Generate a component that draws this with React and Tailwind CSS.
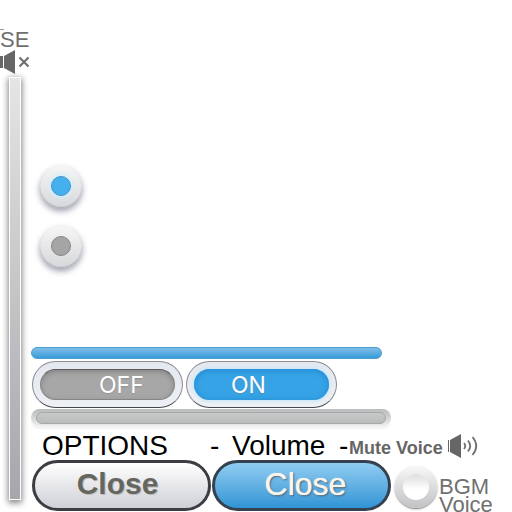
import React, { useState } from "react";

const rangeBase =
  "appearance-none [&::-webkit-slider-thumb]:appearance-none [&::-webkit-slider-thumb]:opacity-0";

function MutedIcon() {
  return (
    <svg className="block h-6 w-[30px]" viewBox="0 0 30 24" aria-hidden="true">
      <path d="M0 6h3v12H0zM4 6L15 0v24L4 18z" fill="#666" />
      <path d="M19.5 7.500l9 9M28.500 7.500l-9 9" stroke="#707070" strokeWidth="2.200" fill="none" />
    </svg>
  );
}

function SpeakerIcon() {
  return (
    <svg className="block h-6 w-[30px]" viewBox="0 0 30 24" aria-hidden="true">
      <path d="M0 6h1v12H0zM2 6L13 0v24L2 18z" fill="#666" />
      <path d="M16 9Q18.500 12 16 15M20 6.500Q24.500 12 20 17.500M24.500 3Q32 12 24.500 21" stroke="#707070" strokeWidth="1.800" fill="none" />
    </svg>
  );
}

function Radio({ label, checked, onChange }) {
  return (
    <label className="relative block size-[42px]">
      <input
        type="radio"
        name="mode"
        aria-label={label}
        checked={checked}
        onChange={onChange}
        className="peer block size-[42px] appearance-none rounded-full bg-linear-to-b from-[#f6f6f6] to-[#d6d7da] shadow-[0_3px_6px_0_#9a9cac,inset_0_-1px_1px_#aaaaaf]"
      />
      <span className="absolute top-[10px] left-[11px] size-5 rounded-full border border-[#858585] bg-[#a5a5a5] peer-checked:border-[#4793c4] peer-checked:bg-[#45b0ee] peer-checked:shadow-[0_0_4px_2px_#d2effb]" />
    </label>
  );
}

function Toggle({ on, children }) {
  return (
    <button
      type="button"
      aria-pressed={on}
      className="h-[47px] w-[151px] rounded-full border border-[#8b8d93] border-b-[#45474d] bg-linear-to-b from-[#e4e8ef] to-[#edf1f5] p-[7px]"
    >
      <span
        className={
          on
            ? "flex h-[31px] items-center rounded-full bg-[#36a3e6] pl-[37px] shadow-[0_0_3px_2px_#cfe8fa,inset_0_1px_6px_#2385cf]"
            : "flex h-[31px] items-center rounded-full border border-[#858585] border-t-[#5c5c5c] bg-[#a7a7a7] pl-[58px] shadow-[inset_0_2px_5px_#858585]"
        }
      >
        <span className="font-['Inter',sans-serif] text-[23px] leading-6 text-white [text-shadow:0_1px_1px_#80808080]">
          {children}
        </span>
      </span>
    </button>
  );
}

export default function App() {
  const [mode, setMode] = useState("on");
  return (
    <main className="flex h-screen min-h-[512px] overflow-hidden bg-white font-['Liberation_Sans',Arial,sans-serif] text-[#666]">
      <aside className="flex w-[31px] shrink-0 flex-col pt-[29px] pb-3">
        <span className="h-px w-1 bg-[#999]" />
        <label htmlFor="se" className="text-[22px] leading-5 text-[#707070]">SE</label>
        <MutedIcon />
        <input
          id="se"
          type="range"
          className={`${rangeBase} mt-[3px] ml-[9px] min-h-0 w-3 flex-1 border border-white bg-linear-to-b from-[#e3e6e3] to-[#a6a6ac] shadow-[0_2px_6px_1px_#858585] [writing-mode:vertical-lr]`}
        />
      </aside>

      <div className="flex min-w-0 flex-1 flex-col">
        <fieldset className="flex flex-1 flex-col gap-[18px] pt-[166px] pl-[9px]">
          <Radio label="On" checked={mode === "on"} onChange={() => setMode("on")} />
          <Radio label="Off" checked={mode === "off"} onChange={() => setMode("off")} />
        </fieldset>

        <input
          type="range"
          aria-label="Volume level"
          className={`${rangeBase} h-3 w-[351px] rounded-full border border-[#4b9dd1] bg-linear-to-b from-[#7dbde8] to-[#359bd8]`}
        />
        <div className="mt-[2px] ml-px flex gap-[3px]">
          <Toggle on={false}>OFF</Toggle>
          <Toggle on>ON</Toggle>
        </div>
        <div className="mt-px w-[360px] rounded-full bg-linear-to-b from-[#b9bcbc] to-[#ececec] px-[5px] pt-[3px] pb-[2px] shadow-[0_3px_0_#f5f4f4]">
          <input
            type="range"
            aria-label="Empty level"
            className={`${rangeBase} block h-3 w-full rounded-full border border-[#a4a8a8] bg-linear-to-b from-[#c7caca] to-[#bababa]`}
          />
        </div>

        <div className="mt-[6px] flex h-7 items-center whitespace-nowrap">
          <h1 className="flex pl-[11px] text-[28px] leading-7 text-black">
            <span className="w-[168px]">OPTIONS</span>
            <span className="w-[22px]">-</span>
            <span className="w-[107px]">Volume</span>
            <span className="w-[10px]">-</span>
          </h1>
          <span className="w-[99px] pt-1 text-[18px] leading-6 font-bold">Mute Voice</span>
          <SpeakerIcon />
        </div>

        <div className="flex h-[52px] items-start">
          <button
            type="button"
            className="ml-px h-[51px] w-[179px] rounded-full border-3 border-[#3b3d43] bg-linear-to-b from-white to-[#cfd0d6] pr-2 pb-1 text-[30px] leading-10 font-bold text-[#65665e] [text-shadow:1px_1px_0_#bbb]"
          >
            Close
          </button>
          <button
            type="button"
            className="ml-px h-[51px] w-[179px] rounded-full border-3 border-[#35414f] bg-linear-to-b from-[#8fcdf2] to-[#2f94d4] pb-1 pl-2 text-[32px] leading-10 text-[#f7f5ec] [text-shadow:0_0_1px_#fff,1px_1px_2px_#50575c]"
          >
            Close
          </button>
          <button
            type="button"
            aria-label="Background music voice"
            className="mt-[6px] ml-1 flex size-[42px] items-center justify-center rounded-full bg-linear-to-b from-[#f8f8f8] to-[#c2c2c6] shadow-[0_1px_2px_#777]"
          >
            <span className="size-[26px] rounded-full bg-linear-to-b from-[#dedee2] to-white to-60%" />
          </button>
          <p className="ml-[2px] pt-[18px] text-[22px] leading-[18px] text-[#707070]">
            BGM
            <br />
            Voice
          </p>
        </div>
      </div>
    </main>
  );
}
